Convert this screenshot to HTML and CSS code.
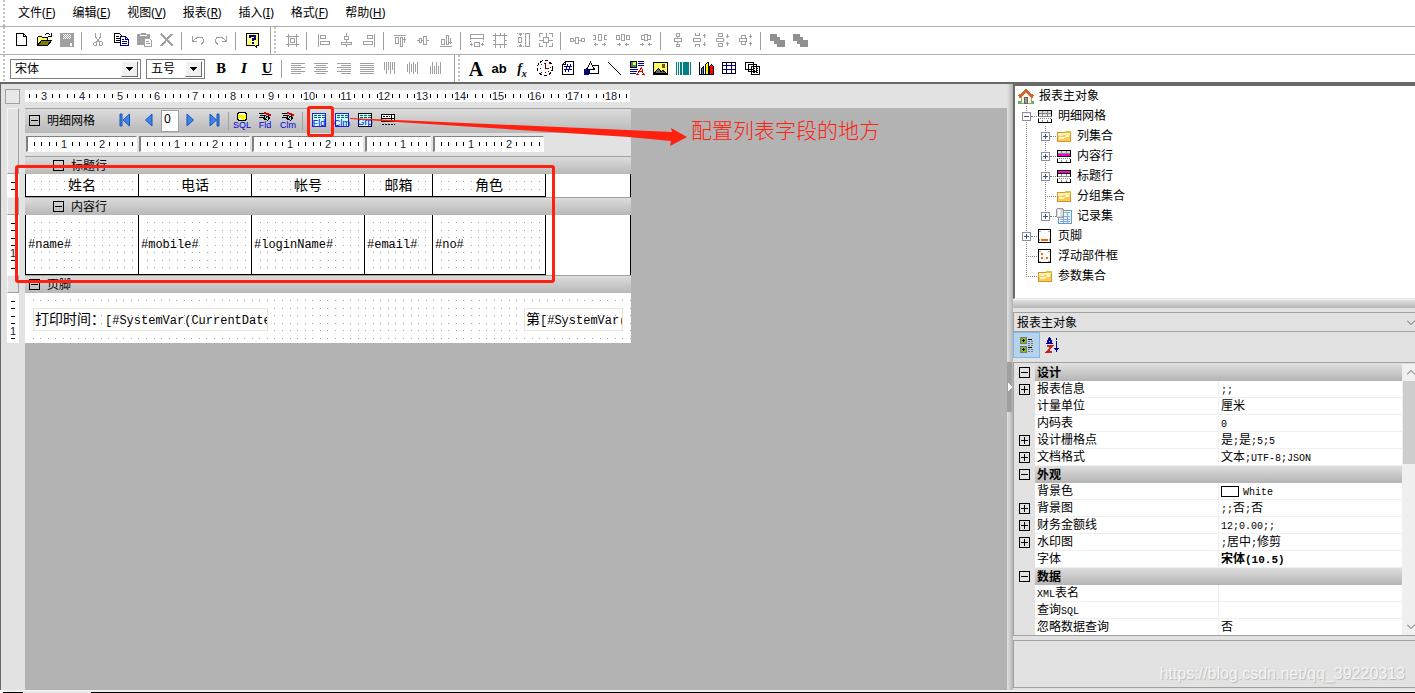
FILE: index.html
```html
<!DOCTYPE html>
<html lang="zh-CN">
<head>
<meta charset="utf-8">
<title>报表设计器</title>
<link rel="stylesheet" href="styles.css">
</head>
<body>
<nav class="menubar">
  <span class="grip"></span>
  <button class="menu">文件(<u>F</u>)</button>
  <button class="menu">编辑(<u>E</u>)</button>
  <button class="menu">视图(<u>V</u>)</button>
  <button class="menu">报表(<u>R</u>)</button>
  <button class="menu">插入(<u>I</u>)</button>
  <button class="menu">格式(<u>F</u>)</button>
  <button class="menu">帮助(<u>H</u>)</button>
</nav>

<div class="toolbar">
  <div class="group">
    <span class="grip"></span>
    <button class="tool" aria-label="新建"><svg viewBox="0 0 16 16"><path fill="#fff" stroke="#000" d="M3.5 1.5H10.5L13.5 4.5V13.5H3.5ZM10.5 1.5V4.5H13.5"/></svg></button>
    <button class="tool" aria-label="打开"><svg viewBox="0 0 16 16"><path fill="#ff6" stroke="#000" d="M1.5 13.5V5.5L2.5 4.5H5.5L6.5 5.5H11.5V8.5"/><path fill="#808000" stroke="#000" d="M1.5 13.5L5.5 8.5H15.5L11.5 13.5Z"/><path fill="none" stroke="#000" d="M9 2.5L10.5 1.5H12.5L14.5 3.5M15.5 1V4.5H12"/></svg></button>
    <button class="tool" aria-label="保存"><svg viewBox="0 0 16 16"><path fill="#a0a0a0" d="M1 1H15V15H1Z"/><path stroke="#fff" stroke-dasharray="1 1" d="M4 2.5H12M5 3.5H12M4 4.5H12M5 5.5H12M4 6.5H12"/><path fill="#fff" d="M11 11h2v3h-2z"/></svg></button>
    <span class="sep"></span>
    <button class="tool" aria-label="剪切"><svg viewBox="0 0 16 16" class="gray"><path d="M5.500 1V5L9.500 10M10.500 1V5L6.500 10M4.500 10.500H6.500V13.500H4.500L3.500 12.500V11.500ZM9.500 9.500H11.500L12.500 10.500V12.500L11.500 13.500H9.500Z"/></svg></button>
    <button class="tool" aria-label="复制"><svg viewBox="0 0 16 16"><path fill="#fff" stroke="#000" d="M1.500 1.500H6.500L8.500 3.500V10.500H1.500ZM3 4.500H6M3 6.500H7M3 8.500H7"/><path fill="#fff" stroke="#000080" d="M7.500 4.500H12.500L15.500 7.500V13.500H7.500ZM12.500 4.500V7.500H15.500M9 7.500H11M9 9.500H14M9 11.500H14"/></svg></button>
    <button class="tool" aria-label="粘贴"><svg viewBox="0 0 16 16"><path fill="#a0a0a0" d="M1 2H5V1H10V2H14V7H8V13H1Z"/><path stroke="#fff" d="M4 3.500H11"/><path fill="#fff" stroke="#a0a0a0" d="M8.500 6.500H13.500L15.500 8.500V14.500H8.500ZM10 9.500H13M10 11.500H14"/></svg></button>
    <button class="tool" aria-label="删除"><svg viewBox="0 0 16 16" class="gray"><path stroke-width="2" d="M2 2L14 14M13 2L2 14"/></svg></button>
    <span class="sep"></span>
    <button class="tool" aria-label="撤销"><svg viewBox="0 0 16 16" class="gray"><path d="M2.500 4V9.500H7M3 9L7 5.500H12L13.500 7.500V10L11 12.500"/></svg></button>
    <button class="tool" aria-label="重做"><svg viewBox="0 0 16 16" class="gray"><path d="M13.500 4V9.500H9M13 9L9 5.500H4L2.500 7.500V10L5 12.500"/></svg></button>
    <span class="sep"></span>
    <button class="tool" aria-label="帮助"><svg viewBox="0 0 16 16"><path fill="#ffff80" stroke="#000" d="M2.500 1.500H14.500V13.500H12.500V15.500L10.500 13.500H2.500Z"/><path fill="none" stroke="#fff" stroke-dasharray="1 2" d="M4 3.500H13M4 6.500H13M4 9.500H13"/><path fill="none" stroke="#000080" stroke-width="2" d="M6 6V4H11V7H9V9M8 11H10"/></svg></button>
  </div>
  <div class="group open">
    <span class="grip"></span>
    <button class="tool" aria-label="网格对齐"><svg viewBox="0 0 16 16" class="gray"><path d="M2 4.500H15M2 12.500H15M4.500 2V15M12.500 2V15M6.500 6.500H10.500V10.500H6.500Z"/></svg></button>
    <span class="sep"></span>
    <button class="tool" aria-label="左对齐"><svg viewBox="0 0 16 16" class="gray"><path d="M3.500 2V15M5.500 3.500H10.500V6.500H5.500ZM5.500 9.500H14.500V12.500H5.500Z"/></svg></button>
    <button class="tool" aria-label="水平居中"><svg viewBox="0 0 16 16" class="gray"><path d="M8.500 1V4M8.500 8V10M8.500 13V15M6.500 4.500H10.500V7.500H6.500ZM3.500 10.500H13.500V12.500H3.500Z"/></svg></button>
    <button class="tool" aria-label="右对齐"><svg viewBox="0 0 16 16" class="gray"><path d="M13.500 2V15M6.500 3.500H11.500V6.500H6.500ZM2.500 9.500H11.500V12.500H2.500Z"/></svg></button>
    <span class="sep"></span>
    <button class="tool" aria-label="顶端对齐"><svg viewBox="0 0 16 16" class="gray"><path d="M2 3.500H14M3.500 5.500H6.500V11.500H3.500ZM8.500 5.500H10.500V14.500H8.500ZM12.500 5V11M11 7.500H14"/></svg></button>
    <button class="tool" aria-label="垂直居中"><svg viewBox="0 0 16 16" class="gray"><path d="M2 8.500H4M7 8.500H8M12 8.500H14M4.500 6.500H6.500V10.500H4.500ZM8.500 4.500H11.500V12.500H8.500Z"/></svg></button>
    <button class="tool" aria-label="底端对齐"><svg viewBox="0 0 16 16" class="gray"><path d="M2 14.500H14M3.500 7.500H6.500V12.500H3.500ZM8.500 3.500H10.500V12.500H8.500ZM12.500 6V12M11 10.500H14"/></svg></button>
    <span class="sep"></span>
    <button class="tool" aria-label="等宽"><svg viewBox="0 0 16 16" class="gray"><path d="M1.500 2.500H14.500V6.500H1.500ZM5.500 10.500H10.500V14.500H5.500ZM1 12.500H4M12 12.500H15M2.500 11V14M13.500 11V14"/><path stroke-dasharray="1 1" d="M1.500 7V11M14.500 7V11"/></svg></button>
    <button class="tool" aria-label="适合网格"><svg viewBox="0 0 16 16" class="gray"><path d="M3.500 3.500H12.500V12.500H3.500ZM1 3.500H3M1 8.500H3M1 12.500H3M13 3.500H15M13 8.500H15M13 12.500H15M3.500 1V3M8.500 1V3M12.500 1V3M3.500 13V16M8.500 13V16M12.500 13V16"/></svg></button>
    <button class="tool" aria-label="等高"><svg viewBox="0 0 16 16" class="gray"><path d="M10.500 1.500H14.500V14.500H10.500ZM3.500 5.500H6.500V10.500H3.500ZM5.500 1V4M4 2.500H7M5.500 12V15M4 13.500H7"/><path stroke-dasharray="1 1" d="M2 1.500H10M2 14.500H10"/></svg></button>
    <button class="tool" aria-label="等大小"><svg viewBox="0 0 16 16" class="gray"><path d="M1.500 5V1.500H5M11 1.500H14.500V5M14.500 11V14.500H11M5 14.500H1.500V11M5.500 5.500H10.500V10.500H5.500ZM1 8.500H5M11 8.500H15M8.500 1V5M8.500 11V15"/></svg></button>
    <span class="sep"></span>
    <button class="tool" aria-label="水平等距"><svg viewBox="0 0 16 16" class="gray"><path d="M1.500 6.500H4.500V9.500H1.500ZM6.500 5.500H9.500V11.500H6.500ZM12.500 6.500H15.500V9.500H12.500ZM5 8.500H6M10 8.500H12"/></svg></button>
    <button class="tool" aria-label="增加水平间距"><svg viewBox="0 0 16 16" class="gray"><path d="M1 3.500H3.500V7.500H1M6.500 2.500H9.500V8.500H6.500ZM15 3.500H12.500V7.500H15M2 12.500H6M10 12.500H14M3.500 11V14M12.500 11V14"/></svg></button>
    <button class="tool" aria-label="减小水平间距"><svg viewBox="0 0 16 16" class="gray"><path d="M1.500 3.500H4.500V7.500H1.500ZM6.500 2.500H9.500V8.500H6.500ZM11.500 3.500H14.500V7.500H11.500ZM2 12.500H6M10 12.500H14M4.500 11V14M11.500 11V14"/></svg></button>
    <button class="tool" aria-label="移除水平间距"><svg viewBox="0 0 16 16" class="gray"><path d="M3.500 3.500H6.500V7.500H3.500ZM6.500 2.500H9.500V8.500H6.500ZM9.500 3.500H12.500V7.500H9.500ZM2 12.500H6M10 12.500H14M4.500 11V14M11.500 11V14"/></svg></button>
    <span class="sep"></span>
    <button class="tool" aria-label="垂直等距"><svg viewBox="0 0 16 16" class="gray"><path d="M7.500 1.500H10.500V4.500H7.500ZM5.500 6.500H12.500V9.500H5.500ZM7.500 12.500H10.500V14.500H7.500ZM8.500 5V6M8.500 10V12"/></svg></button>
    <button class="tool" aria-label="增加垂直间距"><svg viewBox="0 0 16 16" class="gray"><path d="M3.500 1V3.500H7.500V1M1.500 6.500H8.500V9.500H1.500ZM3.500 15V12.500H7.500V15M12.500 2V6M12.500 10V14M11 3.500H14M11 12.500H14"/></svg></button>
    <button class="tool" aria-label="减小垂直间距"><svg viewBox="0 0 16 16" class="gray"><path d="M3.500 1.500H7.500V4.500H3.500ZM1.500 6.500H8.500V9.500H1.500ZM3.500 11.500H7.500V14.500H3.500ZM12.500 2V6M12.500 10V14M11 4.500H14M11 11.500H14"/></svg></button>
    <button class="tool" aria-label="移除垂直间距"><svg viewBox="0 0 16 16" class="gray"><path d="M3.500 3.500H7.500V6.500H3.500ZM1.500 6.500H8.500V9.500H1.500ZM3.500 9.500H7.500V12.500H3.500ZM12.500 2V6M12.500 10V14M11 4.500H14M11 11.500H14"/></svg></button>
    <span class="sep"></span>
    <button class="tool" aria-label="置于顶层"><svg viewBox="0 0 16 16"><path fill="#909090" d="M1 2H8V5H11V8H16V15H8V12H5V9H1Z"/></svg></button>
    <button class="tool" aria-label="置于底层"><svg viewBox="0 0 16 16"><path fill="#909090" d="M1 2H8V5H11V8H16V15H8V12H5V9H1Z"/></svg></button>
  </div>
</div>

<div class="toolbar second">
  <div class="group">
    <span class="grip"></span>
    <span class="combo font-name"><select aria-label="字体"><option>宋体</option></select><span class="drop"><svg viewBox="0 0 7 4"><path d="M0 0H7L3.500 4Z"/></svg></span></span>
    <span class="combo font-size"><select aria-label="字号"><option>五号</option></select><span class="drop"><svg viewBox="0 0 7 4"><path d="M0 0H7L3.500 4Z"/></svg></span></span>
    <button class="tool letter bold">B</button>
    <button class="tool letter italic">I</button>
    <button class="tool letter under">U</button>
    <span class="sep"></span>
    <button class="tool" aria-label="文字左对齐"><svg viewBox="0 0 16 16" class="gray"><path d="M1 3.500H15M1 5.500H11M1 7.500H15M1 9.500H11M1 11.500H15M1 13.500H11"/></svg></button>
    <button class="tool" aria-label="文字居中"><svg viewBox="0 0 16 16" class="gray"><path d="M1 3.500H15M3 5.500H13M1 7.500H15M3 9.500H13M1 11.500H15M3 13.500H13"/></svg></button>
    <button class="tool" aria-label="文字右对齐"><svg viewBox="0 0 16 16" class="gray"><path d="M1 3.500H15M5 5.500H15M1 7.500H15M5 9.500H15M1 11.500H15M5 13.500H15"/></svg></button>
    <button class="tool" aria-label="两端对齐"><svg viewBox="0 0 16 16" class="gray"><path d="M1 3.500H15M1 5.500H15M1 7.500H15M1 9.500H15M1 11.500H15M1 13.500H15"/></svg></button>
    <button class="tool" aria-label="文字靠上"><svg viewBox="0 0 16 16" class="gray"><path d="M2.500 2V10M4.500 2V14M6.500 2V10M8.500 2V14M10.500 2V10M12.500 2V14"/></svg></button>
    <button class="tool" aria-label="文字居中竖直"><svg viewBox="0 0 16 16" class="gray"><path d="M2.500 4V12M4.500 2V14M6.500 4V12M8.500 2V14M10.500 4V12M12.500 2V14"/></svg></button>
    <button class="tool" aria-label="文字靠下"><svg viewBox="0 0 16 16" class="gray"><path d="M2.500 6V14M4.500 2V14M6.500 6V14M8.500 2V14M10.500 6V14M12.500 2V14"/></svg></button>
  </div>
  <div class="group open">
    <span class="grip"></span>
    <button class="tool letter big">A</button>
    <button class="tool letter ab">ab</button>
    <button class="tool letter fx">f<sub>x</sub></button>
    <button class="tool" aria-label="日期时间"><svg viewBox="0 0 16 16"><circle cx="8" cy="8" r="7.500" fill="none" stroke="#000" stroke-dasharray="3 2"/><path fill="none" stroke="#800000" stroke-dasharray="1 3" d="M8 3.500H12L13.500 8L11 12.500H5L3 8L5 3.500Z"/><path fill="none" stroke="#800000" d="M8.500 4V8.500H12"/></svg></button>
    <button class="tool" aria-label="页码"><svg viewBox="0 0 16 16"><path fill="#fff" stroke="#000" d="M5.500 1.500H13.500V14.500H2.500V4.500ZM5.500 1.500V4.500H2.500"/><path stroke="#000080" d="M7.500 4L5.500 12M10.500 4L8.500 12M4 6.500H12M4 9.500H12"/></svg></button>
    <button class="tool" aria-label="图形"><svg viewBox="0 0 16 16"><path fill="#fff" stroke="#000" d="M6.500 5.500H15.500V13.500H6.500Z"/><path fill="#fff" stroke="#000" d="M7.500 2L11.500 9.500H3.500Z"/><path fill="#000080" d="M1 9H6V15H1Z"/></svg></button>
    <button class="tool" aria-label="线段"><svg viewBox="0 0 16 16"><path stroke="#000" d="M2 2L15 15"/></svg></button>
    <button class="tool" aria-label="图文框"><svg viewBox="0 0 16 16"><path fill="#09c" stroke="#000" d="M1.500 1.500H7.500V7.500H1.500Z"/><path fill="#ff0" d="M4 2H7V5H4Z"/><path fill="#f30" d="M2 5H4V7H2Z"/><path stroke="#000080" d="M9 1.500H15M9 3.500H15M9 5.500H15M1 9.500H9M1 11.500H8M1 13.500H7"/><path fill="none" stroke="#e00000" d="M8 14.500L12.500 7.500L14.500 14.500M10 11.500H14M7 14.500H10M13 14.500H16"/></svg></button>
    <button class="tool" aria-label="图像"><svg viewBox="0 0 16 16"><path fill="#ff6" stroke="#000" d="M1.500 2.500H15.500V14.500H1.500Z"/><circle cx="11.500" cy="6" r="2" fill="#805000"/><path fill="#666" stroke="#000" d="M2 13.500L6.500 8.500L9 11.500L11 10.500L15 13.500Z"/></svg></button>
    <button class="tool" aria-label="条形码"><svg viewBox="0 0 16 16"><path stroke="#008080" d="M1.500 2V15M3.500 2V15M10.500 2V15M15.500 2V15M13.500 2V15"/><path stroke="#008080" stroke-width="2" d="M6 2V15M8.500 2V15M12 2V15"/></svg></button>
    <button class="tool" aria-label="图表"><svg viewBox="0 0 16 16"><path fill="none" stroke="#000" d="M1.500 2V14.500H15"/><path fill="#09f" stroke="#000" d="M3.500 8.500L5.500 6.500V14.500H3.500Z"/><path fill="#ff0" stroke="#000" d="M7.500 4.500L9.500 2.500H10.500V14.500H7.500Z"/><path fill="#f00" stroke="#000" d="M11.500 6.500L13.500 4.500L15.500 6.500V14.500H11.500Z"/></svg></button>
    <button class="tool" aria-label="表格"><svg viewBox="0 0 16 16"><path fill="#fff" stroke="#000" d="M1.500 2.500H14.500V13.500H1.500Z"/><path stroke="#000080" d="M2 5.500H14M2 9.500H14M5.500 3V13M10.500 3V13"/></svg></button>
    <button class="tool" aria-label="子报表"><svg viewBox="0 0 16 16"><path fill="#fff" stroke="#000" d="M1.500 2.500H9.500V9.500H1.500ZM4.500 4.500H12.500V11.500H4.500ZM7.500 6.500H15.500V14.500H7.500Z"/><path stroke="#000" d="M9 8.500H11M12 8.500H14M9 10.500H11M12 10.500H14M9 12.500H11M12 12.500H14"/></svg></button>
  </div>
</div>

<main class="workspace">
  <section class="designer">
    <div class="ruler-row"><span class="corner"></span><div class="ruler" data-from="3" data-to="18" data-lead="19"></div></div>
    <div class="designer-body">
      <div class="gutter">
        <span class="stub first"></span>
        <div class="vruler head-size" data-vruler></div>
        <span class="stub"></span>
        <div class="vruler body-size" data-vruler></div>
        <span class="stub"></span>
        <div class="vruler foot-size" data-vruler></div>
      </div>
      <div class="canvas">
        <div class="page">
          <div class="band main">
            <svg class="fold" viewBox="0 0 11 11"><path d="M.5.5H10.500V10.500H.5ZM2 5.500H9"/></svg>
            <span class="band-name">明细网格</span>
            <div class="navigator">
              <button class="tool" aria-label="首行"><svg viewBox="0 0 16 16"><path class="blue" d="M3 2H5V14H3ZM12.500 2V14L6 8Z"/></svg></button>
              <button class="tool" aria-label="上一行"><svg viewBox="0 0 16 16"><path class="blue" d="M11 2V14L4.500 8Z"/></svg></button>
              <input class="row-no" value="0" aria-label="行号">
              <button class="tool" aria-label="下一行"><svg viewBox="0 0 16 16"><path class="blue" d="M5 2V14L11.500 8Z"/></svg></button>
              <button class="tool" aria-label="末行"><svg viewBox="0 0 16 16"><path class="blue" d="M11 2H13V14H11ZM4 2V14L10.500 8Z"/></svg></button>
              <span class="sep"></span>
              <button class="tool" aria-label="查询"><svg viewBox="0 0 16 16"><path fill="#ff0" stroke="#000" d="M4.500.5H11.500L12.500 2.500V7.500L10.500 8.500H5.500L3.500 7.500V2.500Z"/><path fill="#fff" d="M5 1H11V3H5ZM5 6H8V8H5Z"/><text x="8" y="16">SQL</text></svg></button>
              <button class="tool" aria-label="生成字段"><svg viewBox="0 0 16 16"><path fill="none" stroke="#000" d="M2 1.500H7M3 3.500H8M2 5.500H6"/><path fill="#9ee" stroke="#000" d="M8.500 3.500L12.500 6L10.500 8.500L6.500 6Z"/><path stroke="#d00" stroke-width="2" d="M7 1L14 3"/><path stroke="#000" d="M12 3.500L7 8"/><text x="8" y="16">Fld</text></svg></button>
              <button class="tool" aria-label="生成列"><svg viewBox="0 0 16 16"><path fill="none" stroke="#000" d="M2 1.500H7M3 3.500H8M2 5.500H6"/><path fill="#9ee" stroke="#000" d="M8.500 3.500L12.500 6L10.500 8.500L6.500 6Z"/><path stroke="#d00" stroke-width="2" d="M7 1L14 3"/><path stroke="#000" d="M12 3.500L7 8"/><text x="8" y="16">Clm</text></svg></button>
              <span class="sep"></span>
              <button class="tool" aria-label="字段设置"><svg viewBox="0 0 16 16"><path fill="#cff" stroke="#22c" d="M1.500 1.500H14.500V14.500H1.500Z"/><path stroke="#066" stroke-dasharray="3 1" d="M3 3.500H14M3 5.500H14"/><text x="8" y="14">Fld</text></svg></button>
              <button class="tool" aria-label="列设置"><svg viewBox="0 0 16 16"><path fill="#cff" stroke="#22c" d="M1.500 1.500H14.500V14.500H1.500Z"/><path stroke="#066" stroke-dasharray="3 1" d="M3 3.500H14M3 5.500H14"/><text x="8" y="14">Clm</text></svg></button>
              <button class="tool" aria-label="分组设置"><svg viewBox="0 0 16 16"><path fill="#cff" stroke="#000" d="M1.500 1.500H14.500V14.500H1.500Z"/><path stroke="#066" stroke-dasharray="3 1" d="M3 3.500H14M3 5.500H14"/><text x="8" y="13">Grp</text></svg></button>
              <button class="tool" aria-label="行设置"><svg viewBox="0 0 16 16"><path fill="#fff" stroke="#000" d="M1.500 2.500H14.500V9.500H1.500ZM11.500 3V9M2 6.500H15"/><path stroke="#000" stroke-dasharray="2 1" d="M3 4.500H10M2 12.500H15"/></svg></button>
            </div>
          </div>
          <div class="column-rulers">
            <div class="ruler c3" data-from="1" data-to="2" data-lead="36"></div>
            <div class="ruler c3" data-from="1" data-to="2" data-lead="36"></div>
            <div class="ruler c3" data-from="1" data-to="2" data-lead="36"></div>
            <div class="ruler c2" data-from="1" data-to="1" data-lead="36"></div>
            <div class="ruler c3" data-from="1" data-to="2" data-lead="36"></div>
          </div>
          <div class="band sub"><svg class="fold" viewBox="0 0 11 11"><path d="M.5.5H10.500V10.500H.5ZM2 5.500H9"/></svg><span class="band-name">标题行</span></div>
          <table class="detail">
            <colgroup><col class="w1"><col class="w2"><col class="w2"><col class="w3"><col class="w2"><col></colgroup>
            <thead><tr><th><div data-dots>姓名</div></th><th><div data-dots>电话</div></th><th><div data-dots>帐号</div></th><th><div data-dots>邮箱</div></th><th><div data-dots>角色</div></th><td class="rest"></td></tr></thead>
            <tbody>
              <tr><td class="band-cell" colspan="6"><div class="band sub"><svg class="fold" viewBox="0 0 11 11"><path d="M.5.5H10.500V10.500H.5ZM2 5.500H9"/></svg><span class="band-name">内容行</span></div></td></tr>
              <tr><td><div class="field" data-dots>#name#</div></td><td><div class="field" data-dots>#mobile#</div></td><td><div class="field" data-dots>#loginName#</div></td><td><div class="field" data-dots>#email#</div></td><td><div class="field" data-dots>#no#</div></td><td class="rest"></td></tr>
            </tbody>
          </table>
          <div class="band"><svg class="fold" viewBox="0 0 11 11"><path d="M.5.5H10.500V10.500H.5ZM2 5.500H9"/></svg><span class="band-name">页脚</span></div>
          <div class="footer" data-dots>
            <div class="static-box time">打印时间：<span class="code">[#SystemVar(CurrentDate</span></div>
            <div class="static-box number">第<span class="code">[#SystemVar(</span></div>
          </div>
        </div>
      </div>
    </div>
    <div class="mark table-mark"></div>
    <div class="mark button-mark"></div>
    <svg class="mark-arrow" viewBox="0 0 340 32"><path d="M1 3L323 17L322 13L338 22L321 31L322 26L280 22L1 4Z"/></svg>
    <p class="mark-text">配置列表字段的地方</p>
  </section>

  <div class="splitter"><button class="collapse" aria-label="折叠"><svg viewBox="0 0 4 8"><path fill="#fff" d="M0 0L4 4L0 8Z"/></svg></button></div>

  <aside class="side">
    <div class="tree">
      <div class="root"><svg class="ico" viewBox="0 0 16 16"><path fill="#5b4" d="M0 13H16V16H0Z"/><path fill="#fff3d8" stroke="#a98" d="M3.500 8V15.500H13V8L8 3Z"/><path fill="#999" stroke="#666" d="M6.500 9.500H9.500V15H6.500Z"/><path fill="none" stroke="#c63" stroke-width="3" d="M1 9L8 2.500L15 9"/></svg><span>报表主对象</span></div>
      <ul class="level">
        <li><div class="node"><span class="exp minus"></span><span class="dash"></span><svg class="ico" viewBox="0 0 16 16"><path fill="#ddd" d="M1 2H15V7H1Z"/><path fill="none" stroke="#000" d="M1 2.500H15M1.500 2V8M14.500 2V8M1 14.500H15M1.500 11V15M14.500 11V15"/><path fill="none" stroke="#888" d="M2 5.500H14M1 8.500H15M5.500 3V8M10.500 3V8M5.500 12V14M10.500 12V14"/><path stroke="#888" stroke-dasharray="1 1" d="M1 10.500H15"/></svg><span>明细网格</span></div>
          <ul class="level inner">
            <li><div class="node"><span class="exp plus"></span><span class="dash"></span><svg class="ico" viewBox="0 0 16 16"><use href="#folder"/></svg><span>列集合</span></div></li>
            <li><div class="node"><span class="exp plus"></span><span class="dash"></span><svg class="ico" viewBox="0 0 16 16"><path fill="#ddd" d="M1 2H15V6H1Z"/><path fill="#f0c" d="M2 6H14V8H2Z"/><path fill="none" stroke="#000" d="M1 2.500H15M1.500 2V9M14.500 2V9M1 8.500H15M1 14.500H15M1.500 11V15M14.500 11V15"/><path fill="none" stroke="#888" d="M2 5.500H14M5.500 3V6M10.500 3V6M5.500 12V14M10.500 12V14"/><path stroke="#888" stroke-dasharray="1 1" d="M1 10.500H15"/></svg><span>内容行</span></div></li>
            <li><div class="node"><span class="exp plus"></span><span class="dash"></span><svg class="ico" viewBox="0 0 16 16"><path fill="#f0c" d="M2 3H14V5H2Z"/><path fill="none" stroke="#000" d="M1 2.500H15M1.500 2V9M14.500 2V9M1 5.500H15M1 14.500H15M1.500 11V15M14.500 11V15"/><path fill="none" stroke="#888" d="M2 8.500H14M5.500 6V8M10.500 6V8M5.500 12V14M10.500 12V14"/><path stroke="#888" stroke-dasharray="1 1" d="M1 10.500H15"/></svg><span>标题行</span></div></li>
            <li><div class="node leaf"><span class="dash"></span><svg class="ico" viewBox="0 0 16 16"><use href="#folder"/></svg><span>分组集合</span></div></li>
            <li><div class="node"><span class="exp plus"></span><span class="dash"></span><svg class="ico" viewBox="0 0 16 16"><path fill="#eaf4ff" stroke="#69c" d="M2.500 2.500H15.500V15.500H2.500Z"/><path stroke="#7c7" d="M8 4.500H14"/><path stroke="#8ad" d="M4 8.500H14M4 11.500H14M4 13.500H14M7.500 7V15M11.500 5V15"/><path fill="#ddd" stroke="#999" d="M.5 1.500L1.500.5H6L7 1.500V8.500L6 9.500H1.500L.5 8.500Z"/><path stroke="#fff" stroke-width="2" d="M3 2V8"/></svg><span>记录集</span></div></li>
          </ul></li>
        <li><div class="node"><span class="exp plus"></span><span class="dash"></span><svg class="ico" viewBox="0 0 16 16"><path fill="#fff" stroke="#000" d="M1.500 1.500H13.500V14.500H1.500Z"/><path fill="#f60" d="M4 11H11V13H4Z"/><path fill="#aaa" d="M2 3h2v1H2ZM11 3h2v1h-2ZM2 11h1v2H2ZM12 11h1v2h-1Z"/></svg><span>页脚</span></div></li>
        <li><div class="node leaf"><span class="dash"></span><svg class="ico" viewBox="0 0 16 16"><path fill="#fff" stroke="#000" d="M1.500 1.500H13.500V14.500H1.500Z"/><path fill="#f60" d="M4 5h2v2H4ZM4 9h2v2H4ZM9 9h2v2H9Z"/><path fill="#aaa" d="M2 3h2v1H2ZM11 3h2v1h-2ZM2 13h2v1H2ZM11 13h2v1h-2Z"/></svg><span>浮动部件框</span></div></li>
        <li><div class="node leaf"><span class="dash"></span><svg class="ico" viewBox="0 0 16 16"><g id="folder"><path fill="#ffc94d" stroke="#c93" d="M1.500 13.500V4.500H8.500L9.500 3.500H14.500V13.500Z"/><path fill="#cc3" d="M9 3H15V5H9Z"/><path fill="#fff0b0" d="M2 5H14V7H2ZM2 7H7L6 8H2Z"/><path fill="#fff8d8" d="M3 9H8L10 7H13V9H9L7 11H3Z"/></g></svg><span>参数集合</span></div></li>
      </ul>
    </div>
    <div class="hbar"></div>
    <div class="object-pick"><select aria-label="对象"><option>报表主对象</option></select><svg viewBox="0 0 8 5"><path d="M0 .5L4 4.500L8 .5"/></svg></div>
    <div class="prop-tools">
      <button class="ptool active" aria-label="分类"><svg viewBox="0 0 16 16"><path fill="#8b1" stroke="#777" d="M1.500.5H7.500V6.500H1.500ZM1.500 9.500H7.500V15.500H1.500Z"/><path stroke="#000" d="M3 3.500H6M4.500 2V5M3 12.500H6M4.500 11V14M9 2.500H13M9 10.500H13"/><path stroke="#777" stroke-dasharray="2 1" d="M9 4.500H15M9 6.500H15M9 8.500H15M9 12.500H15M9 14.500H15"/></svg></button>
      <button class="ptool" aria-label="字母排序"><svg viewBox="0 0 16 16"><path fill="none" stroke="#009" stroke-width="2" d="M2 7L4.500 1L7 7M2 5.500H7"/><path fill="none" stroke="#c22" stroke-width="2" d="M2 9H7L2 15H7"/><path fill="#009" d="M11 1H12V3H11ZM11 4H12V11H14L11.500 15L9 11H11Z"/></svg></button>
    </div>
    <div class="grid-wrap">
      <table class="props">
        <colgroup><col class="pg"><col class="pn"><col></colgroup>
        <tr class="cat"><td class="m"></td><th colspan="2">设计</th></tr>
        <tr><td class="p"></td><th>报表信息</th><td><i>;;</i></td></tr>
        <tr><td></td><th>计量单位</th><td>厘米</td></tr>
        <tr><td></td><th>内码表</th><td><i>0</i></td></tr>
        <tr><td class="p"></td><th>设计栅格点</th><td>是<i>;</i>是<i>;5;5</i></td></tr>
        <tr><td class="p"></td><th>文档格式</th><td>文本<i>;UTF-8;JSON</i></td></tr>
        <tr class="cat"><td class="m"></td><th colspan="2">外观</th></tr>
        <tr><td></td><th>背景色</th><td><span class="swatch"></span><i>White</i></td></tr>
        <tr><td class="p"></td><th>背景图</th><td><i>;;</i>否<i>;</i>否</td></tr>
        <tr><td class="p"></td><th>财务金额线</th><td><i>12;0.00;;</i></td></tr>
        <tr><td class="p"></td><th>水印图</th><td><i>;</i>居中<i>;</i>修剪</td></tr>
        <tr><td></td><th>字体</th><td><b>宋体<i>(10.5)</i></b></td></tr>
        <tr class="cat"><td class="m"></td><th colspan="2">数据</th></tr>
        <tr><td></td><th><i>XML</i>表名</th><td></td></tr>
        <tr><td></td><th>查询<i>SQL</i></th><td></td></tr>
        <tr><td></td><th>忽略数据查询</th><td>否</td></tr>
      </table>
      <div class="scroll"><svg viewBox="0 0 8 5"><path d="M0 4.500L4 .5L8 4.500"/></svg><span class="thumb"></span><svg viewBox="0 0 8 5"><path d="M0 .5L4 4.500L8 .5"/></svg></div>
    </div>
    <div class="desc"><span class="site">https://blog.csdn.net/qq_39220313</span></div>
  </aside>
</main>
<div class="bottom-edge"></div>
<script src="script.js"></script>
</body>
</html>
```
FILE: styles.css
```css
* { box-sizing: border-box; }
body {
  margin: 0;
  height: 100vh;
  display: flex;
  flex-direction: column;
  background: #fff;
  color: #000;
  font: 12px/16px "Noto Sans", "Noto Sans CJK SC", sans-serif;
  overflow: hidden;
}
button, select, input { font: inherit; color: inherit; border: 0; padding: 0; margin: 0; background: none; border-radius: 0; }
svg { display: block; shape-rendering: crispEdges; }
.gray { fill: none; stroke: #a0a0a0; }

/* menu and toolbars */
.menubar { flex: none; height: 27px; display: flex; align-items: center; gap: 17px; border-bottom: 1px solid #b0b0b0; }
.menubar .grip { margin-right: -4px; }
.grip { flex: none; width: 2px; height: 100%; margin: 0 5px 0 3px; background: repeating-linear-gradient(#c0c0c0 0 2px, transparent 2px 4px); }
.toolbar { flex: none; display: flex; height: 28px; border-bottom: 1px solid #b0b0b0; }
.toolbar.second { height: 29px; border-bottom: 2px solid #696969; }
.group { display: flex; align-items: center; padding-right: 6px; border-right: 1px solid #a0a0a0; }
.group.open { border-right: 0; }
.tool { flex: none; width: 23px; height: 22px; padding: 0 4px 2px 3px; }
.tool svg { width: 16px; height: 16px; }
.sep { flex: none; width: 8px; height: 18px; border-left: 1px solid #a0a0a0; margin-left: 2px; margin-right: -2px; }
.combo { display: flex; align-items: center; height: 20px; border: 1px solid #808080; background: #fff; padding: 1px 2px; margin-right: 5px; }
.combo select { flex: 1; min-width: 0; height: 16px; appearance: none; padding-left: 2px; }
.combo .drop { width: 17px; height: 16px; display: flex; align-items: center; justify-content: center; background: #f0f0f0; border: 1px solid #fff; border-right-color: #696969; border-bottom-color: #696969; }
.combo .drop svg { width: 7px; height: 4px; }
.font-name { width: 131px; }
.font-size { width: 59px; }
.letter { font: bold 12px/20px "DejaVu Serif", serif; text-align: center; padding: 0 1px 0 0; }
.letter.italic { font-style: italic; }
.letter.under { text-decoration: underline; }
.letter.big { font: bold 20px/20px "Liberation Serif", serif; }
.letter.ab { font: bold 13px/20px "Liberation Sans", sans-serif; }
.letter.fx { font: italic bold 14px/18px "Liberation Serif", serif; }
.letter sub { font-size: 10px; line-height: 8px; }

/* workspace */
.workspace { flex: 1; min-height: 0; display: flex; border-left: 1px solid #696969; background: #e2e2e2; }
.designer { position: relative; flex: 1; min-width: 0; display: flex; flex-direction: column; overflow: hidden; }
.ruler-row { flex: none; height: 24px; display: flex; align-items: center; }
.corner { width: 15px; height: 15px; margin: 0 5px 0 4px; border: 1px solid #a0a0a0; background: #e8e8e8; }
.ruler { background: #fff; }
.ruler svg, .vruler svg { width: 100%; height: 100%; }
.ruler text, .vruler text { font: 11px "Liberation Sans", sans-serif; fill: #223; text-anchor: middle; }
.ruler-row .ruler { width: 605px; height: 12px; }
.designer-body { flex: 1; min-height: 0; display: flex; }
.gutter { width: 24px; flex: none; padding-left: 6px; }
.gutter > * { display: block; width: 12px; }
.stub { height: 18px; border: 1px solid #f4f4f4; border-right-color: #a0a0a0; border-bottom-color: #a0a0a0; }
.stub.first { height: 66px; }
.vruler { background: #fff; }
.head-size { height: 23px; }
.body-size { height: 60px; }
.foot-size { height: 50px; }
.canvas { flex: 1; min-width: 0; background: #b3b3b3; }
.page { width: 606px; }
.band { height: 18px; display: flex; align-items: center; padding-left: 4px; border-top: 1px solid #a0a0a0; background: linear-gradient(#dcdcdc, #b8b8b8); }
.band.main { height: 25px; padding-bottom: 1px; }
.band.sub { padding-left: 28px; }
.fold { width: 11px; height: 11px; fill: none; stroke: #000; margin-right: 7px; }
.navigator { display: flex; align-items: center; margin-left: 19px; }
.navigator .tool:first-child { margin-right: 1px; }
.navigator .row-no + .tool + .tool { margin-left: 1px; }
.navigator .row-no + .tool + .tool + .sep { width: 5px; }
.navigator svg { overflow: visible; }
.navigator text { font: 9px "Liberation Sans", sans-serif; fill: #0000e0; text-anchor: middle; }
.blue { fill: #3b82ec; stroke: #1b55b8; shape-rendering: auto; }
.row-no { width: 18px; height: 22px; padding: 0 0 4px 2px; background: #fff; border: 1px solid #a0a0a0; }
.column-rulers { height: 23px; display: flex; gap: 2px; align-items: center; padding: 0 1px 1px; background: #e2e2e2; }
.column-rulers .ruler { height: 16px; border: 1px solid #fff; border-top: 1px solid #808080; border-left: 2px solid #808080; }
.c3 { width: 111px; }
.c2 { width: 66px; }
.detail { width: 606px; table-layout: fixed; border-collapse: separate; border-spacing: 0; background: #fff; font-size: 14px; }
.w1 { width: 114px; }
.w2 { width: 113px; }
.w3 { width: 68px; }
.detail th, .detail td { padding: 0; font-weight: normal; border-right: 1px solid #000; border-bottom: 1px solid #000; }
.detail th:first-child, .detail td:first-child { border-left: 1px solid #000; }
.detail .band-cell, .detail .band-cell:first-child { border: 0; font-size: 12px; }
.detail .rest { border-bottom: 0; }
.detail th div { height: 22px; line-height: 21px; }
.detail .field { height: 59px; line-height: 60px; padding-left: 2px; }
.field, .code { font-family: "Liberation Mono", monospace; font-size: 12px; }
[data-dots] { position: relative; z-index: 0; overflow: hidden; }
.dots { position: absolute; inset: 0; width: 100%; height: 100%; z-index: -1; stroke: #a89ca4; }
.footer { height: 50px; display: flex; align-items: flex-start; justify-content: space-between; padding: 15px 8px 0; background: #fff; font-size: 14px; }
.static-box { height: 23px; border: 1px solid #e8e4d6; line-height: 20px; white-space: nowrap; overflow: hidden; padding-left: 1px; }
.time { width: 235px; }
.number { width: 99px; }

/* red callouts over the canvas */
.mark { position: absolute; border: 3px solid #ff2010; border-radius: 3px; pointer-events: none; }
.table-mark { left: 14px; top: 81px; width: 540px; height: 118px; }
.button-mark { left: 306px; top: 22px; width: 27px; height: 31px; }
.mark-arrow { position: absolute; left: 348px; top: 31px; width: 340px; height: 32px; fill: #ff2010; shape-rendering: auto; overflow: visible; }
.mark-text { position: absolute; left: 690px; top: 30px; margin: 0; color: #ff2010; font: 300 21px/30px "Noto Sans CJK SC", sans-serif; }

/* splitter */
.splitter { flex: none; width: 6px; background: linear-gradient(90deg, #e2e2e2, #b4b4b4); }
.collapse { display: flex; align-items: center; justify-content: center; width: 5px; height: 50px; margin-top: 278px; background: #a0a0a0; }
.collapse svg { width: 4px; height: 8px; flex: none; }

/* side panel */
.side { flex: none; width: 402px; display: flex; flex-direction: column; min-height: 0; }
.tree { flex: none; background: #fff; border: 2px solid #696969; border-right: 0; border-bottom: 1px solid #e2e2e2; padding-bottom: 12px; }
.root, .node { display: flex; align-items: center; height: 20px; }
.root { padding-left: 3px; gap: 5px; }
.ico { width: 16px; height: 16px; flex: none; }
.level { list-style: none; margin: 0; padding: 0 0 0 7px; background: repeating-linear-gradient(#808080 0 1px, transparent 1px 2px) 11px 0 / 1px calc(100% - 10px) no-repeat; }
.inner { padding-left: 19px; background-position: 23px 0; }
.node .ico { margin-right: 5px; }
.exp { flex: none; width: 9px; height: 9px; border: 1px solid #909090; background: linear-gradient(#3050a0, #3050a0) center / 5px 1px no-repeat, #fff; }
.exp.plus { background: linear-gradient(#3050a0, #3050a0) center / 5px 1px no-repeat, linear-gradient(#3050a0, #3050a0) center / 1px 5px no-repeat, #fff; }
.dash { flex: none; width: 6px; border-top: 1px dotted #808080; }
.leaf .dash { width: 11px; margin-left: 4px; }
.hbar { flex: none; height: 9px; margin-bottom: 4px; background: linear-gradient(#e2e2e2, #b4b4b4); border-top: 1px solid #f4f4f4; }
.object-pick { flex: none; height: 20px; display: flex; align-items: center; border: 1px solid #a0a0a0; border-right: 0; }
.object-pick select { flex: 1; appearance: none; padding: 1px 0 0 3px; height: 18px; }
.object-pick svg, .scroll svg { width: 8px; height: 5px; fill: none; stroke: #606060; stroke-width: 1px; shape-rendering: auto; }
.prop-tools { flex: none; height: 30px; display: flex; }
.ptool { width: 27px; height: 26px; padding: 4px 5px; }
.ptool.active { background: #b5d3ea; border: 1px solid #7cb8ea; }
.ptool svg { width: 16px; height: 16px; }
.grid-wrap { flex: 1; min-height: 0; display: flex; overflow: hidden; border: 1px solid #a0a0a0; border-right: 0; padding-top: 1px; margin-bottom: 4px; }
.props { flex: 1; table-layout: fixed; border-collapse: separate; border-spacing: 0; align-self: flex-start; }
.pg { width: 21px; }
.pn { width: 184px; }
.props tr { height: 17px; }
.props th, .props td { height: 17px; padding: 0 0 0 2px; line-height: 16px; font-weight: normal; text-align: left; white-space: nowrap; background: #fff; border-bottom: 1px solid #f0f0f0; }
.props th { border-right: 1px solid #f0f0f0; }
.props td:first-child { background: #e2e2e2; border: 0; }
.props .cat th { font-weight: bold; border: 0; background: linear-gradient(#dedede, #b4b4b4); }
.props i { font: 10px/12px "Liberation Mono", monospace; }
.props b i { font-weight: bold; font-size: 11px; }
.props td.p:first-child, .props td.m:first-child { background: linear-gradient(#000, #000) 7px 8px / 7px 1px no-repeat, linear-gradient(#e2e2e2, #e2e2e2) 6px 4px / 9px 9px no-repeat, linear-gradient(#000, #000) 5px 3px / 11px 11px no-repeat, #e2e2e2; }
.props td.p:first-child { background: linear-gradient(#000, #000) 7px 8px / 7px 1px no-repeat, linear-gradient(#000, #000) 10px 5px / 1px 7px no-repeat, linear-gradient(#e2e2e2, #e2e2e2) 6px 4px / 9px 9px no-repeat, linear-gradient(#000, #000) 5px 3px / 11px 11px no-repeat, #e2e2e2; }
.swatch { display: inline-block; width: 18px; height: 11px; border: 1px solid #000; margin-right: 4px; vertical-align: -2px; }
.scroll { flex: none; width: 13px; display: flex; flex-direction: column; align-items: flex-end; background: #f0f0f0; padding: 6px 0; }
.thumb { width: 12px; height: 83px; margin: 6px 0 auto; background: #cdcdcd; }
.desc { flex: none; height: 48px; margin-bottom: 2px; border: 1px solid #a0a0a0; border-right: 0; display: flex; justify-content: flex-end; align-items: flex-end; padding: 0 10px 3px 0; }
.site { font: 16px/20px "Liberation Sans", sans-serif; color: #f4f4f4; text-shadow: 1px 1px 1px #b8b8b8; }
.bottom-edge { flex: none; height: 3px; border-top: 2px solid #f0f0f0; background: linear-gradient(90deg, #fff 3px, #000 3px 23px, #e2e2e2 23px 91px, #000 91px); }
```
FILE: script.js
```js
const CM = 37.8;
const STEP = CM / 5;
const NS = "http://www.w3.org/2000/svg";

function svgEl(name, attrs, parent) {
  const el = document.createElementNS(NS, name);
  for (const key in attrs) el.setAttribute(key, attrs[key]);
  parent.appendChild(el);
  return el;
}

// Design grid points, five per centimetre.
document.querySelectorAll("[data-dots]").forEach(box => {
  const w = box.clientWidth, h = box.clientHeight;
  let d = "";
  for (let y = STEP; y < h - 1; y += STEP)
    for (let x = STEP; x < w - 1; x += STEP)
      d += `M${Math.round(x)} ${Math.floor(y) + 0.5}h1`;
  const svg = svgEl("svg", { class: "dots" }, box);
  svgEl("path", { d }, svg);
});

// Horizontal rulers: a number on each centimetre, ticks between.
document.querySelectorAll(".ruler").forEach(ruler => {
  const w = ruler.clientWidth, h = ruler.clientHeight;
  const from = +ruler.dataset.from, to = +ruler.dataset.to, lead = +ruler.dataset.lead;
  const svg = svgEl("svg", {}, ruler);
  const mid = Math.floor(h / 2);
  let d = "";
  for (let i = -4; ; i++) {
    const x = lead + i * STEP;
    if (x > w - 2) break;
    if (x < 2) continue;
    const n = from + i / 5;
    if (i % 5 === 0 && n <= to) svgEl("text", { x: Math.round(x), y: mid + 4 }, svg).textContent = n;
    else d += `M${Math.round(x)}.5 ${mid - 2}v4`;
  }
  svgEl("path", { d, stroke: "#000" }, svg);
});

// Vertical rulers start from zero in each section.
document.querySelectorAll("[data-vruler]").forEach(ruler => {
  const h = ruler.clientHeight;
  const svg = svgEl("svg", {}, ruler);
  let d = "";
  for (let i = 1; i * STEP < h - 2; i++) {
    const y = Math.round(i * STEP);
    if (i % 5 === 0) svgEl("text", { x: 6, y: y + 4 }, svg).textContent = i / 5;
    else d += `M4 ${y}.5h4`;
  }
  svgEl("path", { d, stroke: "#000" }, svg);
});
```
